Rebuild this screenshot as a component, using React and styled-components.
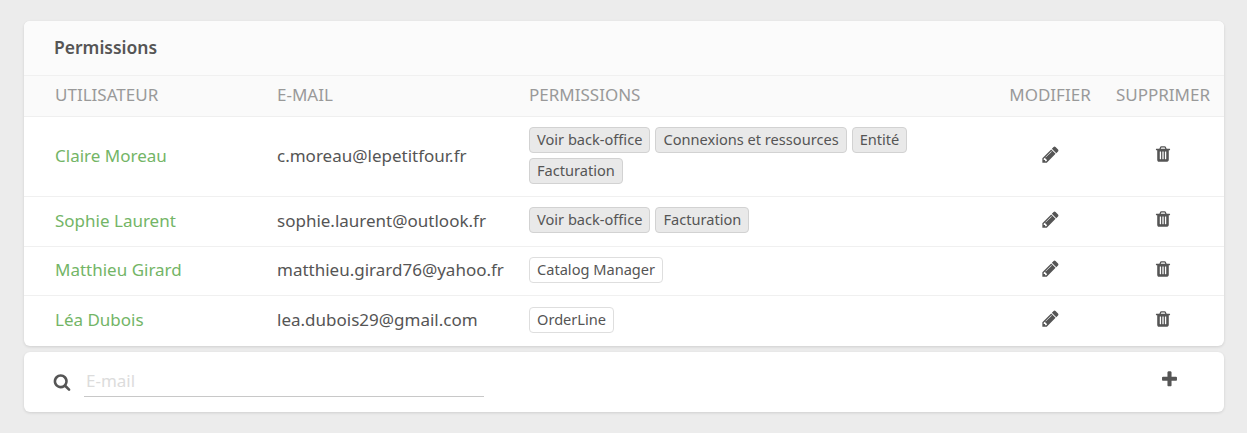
import React from 'react';
import styled, { createGlobalStyle } from 'styled-components';

const users = [
  { name: 'Claire Moreau', email: 'c.moreau@lepetitfour.fr', perms: ['Voir back-office', 'Connexions et ressources', 'Entité', 'Facturation'], height: 80 },
  { name: 'Sophie Laurent', email: 'sophie.laurent@outlook.fr', perms: ['Voir back-office', 'Facturation'], height: 50 },
  { name: 'Matthieu Girard', email: 'matthieu.girard76@yahoo.fr', roles: ['Catalog Manager'], height: 49 },
  { name: 'Léa Dubois', email: 'lea.dubois29@gmail.com', roles: ['OrderLine'], height: 50 },
];

const icons = {
  pencil: 'M491 1536l91-91-235-235-91 91v107h128v128h107zm523-928q0-22-22-22-10 0-17 7l-542 542q-7 7-7 17 0 22 22 22 10 0 17-7l542-542q7-7 7-17zm-54-192l416 416-832 832h-416v-416zm683 96q0 53-37 90l-166 166-416-416 166-165q36-38 90-38 53 0 91 38l235 234q37 39 37 91z',
  trash: 'M704 1376v-704q0-14-9-23t-23-9h-64q-14 0-23 9t-9 23v704q0 14 9 23t23 9h64q14 0 23-9t9-23zm256 0v-704q0-14-9-23t-23-9h-64q-14 0-23 9t-9 23v704q0 14 9 23t23 9h64q14 0 23-9t9-23zm256 0v-704q0-14-9-23t-23-9h-64q-14 0-23 9t-9 23v704q0 14 9 23t23 9h64q14 0 23-9t9-23zm-544-992h448l-48-117q-7-9-17-11h-317q-10 2-17 11zm928 32v64q0 14-9 23t-23 9h-96v948q0 83-47 143.500t-113 60.500h-832q-66 0-113-58.500t-47-141.500v-952h-96q-14 0-23-9t-9-23v-64q0-14 9-23t23-9h309l70-167q15-37 54-63t79-26h320q40 0 79 26t54 63l70 167h309q14 0 23 9t9 23z',
  search: 'M1216 832q0-185-131.500-316.500t-316.500-131.500-316.500 131.500-131.500 316.500 131.500 316.500 316.500 131.500 316.500-131.500 131.500-316.500zm512 832q0 52-38 90t-90 38q-54 0-90-38l-343-342q-179 124-399 124-143 0-273.500-55.500t-225-150-150-225-55.500-273.500 55.500-273.500 150-225 225-150 273.500-55.500 273.500 55.500 225 150 150 225 55.500 273.500q0 220-124 399l343 343q37 37 37 90z',
  plus: 'M1600 736v192q0 40-28 68t-68 28h-416v416q0 40-28 68t-68 28h-192q-40 0-68-28t-28-68v-416h-416q-40 0-68-28t-28-68v-192q0-40 28-68t68-28h416v-416q0-40 28-68t68-28h192q40 0 68 28t28 68v416h416q40 0 68 28t28 68z',
};

const Icon = ({ name, size }) => (
  <svg width={size} height={size} viewBox="0 0 1792 1792" fill="currentColor">
    <path d={icons[name]} />
  </svg>
);

const App = () => {
  return (
    <Page>
      <GlobalStyle />
      <PreviousCard />
      <Card>
        <Title>Permissions</Title>
        <HeadRow>
          <Cell>Utilisateur</Cell>
          <Cell>E-mail</Cell>
          <Cell>Permissions</Cell>
          <ActionCell>Modifier</ActionCell>
          <ActionCell>Supprimer</ActionCell>
        </HeadRow>
        {users.map((user) => (
          <Row key={user.email} $height={user.height}>
            <Name>{user.name}</Name>
            <Email>{user.email}</Email>
            <Tags>
              {(user.perms || []).map((p) => <Tag key={p}>{p}</Tag>)}
              {(user.roles || []).map((r) => <Tag key={r} $outline>{r}</Tag>)}
            </Tags>
            <IconCell><Icon name="pencil" size={19} /></IconCell>
            <IconCell><Icon name="trash" size={18} /></IconCell>
          </Row>
        ))}
      </Card>
      <SearchCard>
        <Icon name="search" size={18} />
        <SearchInput placeholder="E-mail" />
        <AddButton><Icon name="plus" size={19} /></AddButton>
      </SearchCard>
    </Page>
  );
};

const GlobalStyle = createGlobalStyle`
  html, body {
    margin: 0;
    background: #ececec;
  }
  body {
    font-family: "Noto Sans", "Open Sans", sans-serif;
    color: #555;
  }
`
const Page = styled.div`
  box-sizing: border-box;
  height: 433px;
  padding: 0 23px 0 24px;
  overflow: hidden;
`
const PreviousCard = styled.div`
  height: 0;
  margin-bottom: 21px;
  box-shadow: 0 1px 3px rgba(0, 0, 0, 0.12);
`
const Card = styled.div`
  background: #fff;
  border-radius: 6px;
  box-shadow: 0 1px 3px rgba(0, 0, 0, 0.12);
  overflow: hidden;
`
const Title = styled.div`
  box-sizing: border-box;
  height: 55px;
  padding: 14px 30px 0;
  background: #fbfbfb;
  border-bottom: 1px solid #f0f0f0;
  font-size: 17.5px;
  line-height: 24px;
  font-weight: 600;
  color: #555;
`
const grid = `
  display: grid;
  grid-template-columns: 253px 252px 465px 112px 114px 4px;
  align-items: center;
`
const HeadRow = styled.div`
  ${grid}
  height: 41px;
  padding-bottom: 4px;
  background: #fafafa;
  border-bottom: 1px solid #efefef;
  box-sizing: border-box;
  font-size: 17px;
  color: #999;
  text-transform: uppercase;
  & > :first-child {
    padding-left: 31px;
  }
`
const Cell = styled.div`
  white-space: nowrap;
`
const ActionCell = styled.div`
  display: flex;
  justify-content: center;
  white-space: nowrap;
`
const IconCell = styled(ActionCell)`
  color: #555;
  margin-top: -2px;
`
const Row = styled.div`
  ${grid}
  box-sizing: border-box;
  height: ${(p) => p.$height}px;
  padding-bottom: 3px;
  border-bottom: 1px solid #f0f0f0;
  font-size: 17px;
  &:last-child {
    border-bottom: 0;
  }
`
const Name = styled.div`
  padding-left: 31px;
  color: #73b566;
`
const Email = styled.div`
  color: #555;
  white-space: nowrap;
`
const Tags = styled.div`
  display: flex;
  flex-wrap: wrap;
  gap: 5px;
`
const Tag = styled.span`
  box-sizing: border-box;
  height: 26px;
  padding: 0 7px;
  border: 1px solid ${(p) => (p.$outline ? '#dedede' : '#d2d2d2')};
  border-radius: 4px;
  background: ${(p) => (p.$outline ? '#fff' : '#e9e9e9')};
  font-size: 14.6px;
  line-height: 23px;
  color: #555;
  white-space: nowrap;
`
const SearchCard = styled.div`
  display: flex;
  align-items: center;
  box-sizing: border-box;
  height: 60px;
  margin-top: 6px;
  padding: 0 45px 0 29px;
  background: #fff;
  border-radius: 6px;
  box-shadow: 0 1px 3px rgba(0, 0, 0, 0.12);
  color: #555;
`
const SearchInput = styled.input`
  box-sizing: border-box;
  width: 400px;
  height: 30px;
  margin: 0 0 0 13px;
  padding: 0 2px 2px;
  border: 0;
  border-bottom: 1px solid #c8c8c8;
  outline: none;
  background: transparent;
  font-family: inherit;
  font-size: 17px;
  &::placeholder {
    color: #dcdcdc;
  }
`
const AddButton = styled.div`
  display: flex;
  margin: -6px 0 0 auto;
`

export default App;
